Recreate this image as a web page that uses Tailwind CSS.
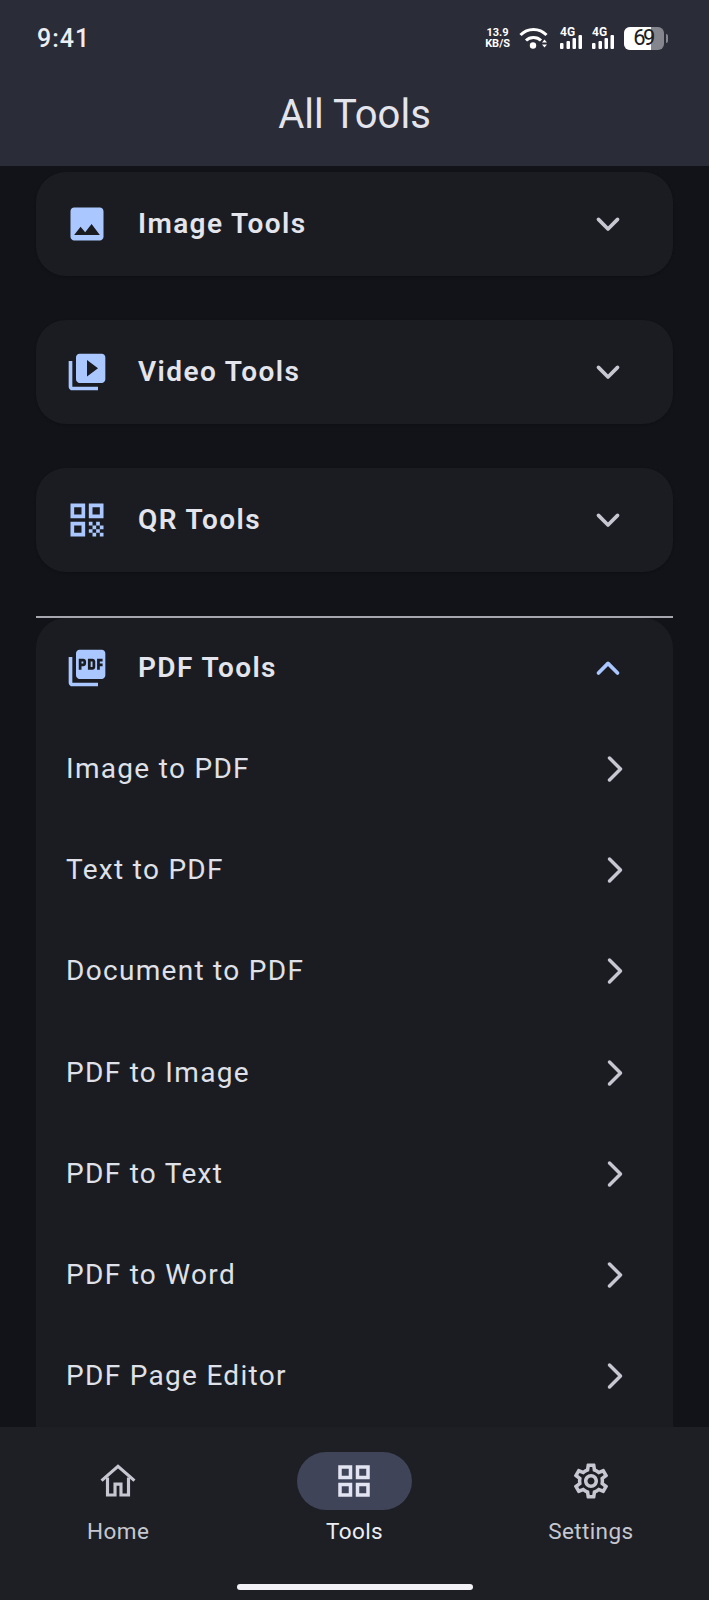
<!DOCTYPE html>
<html lang="en">
<head>
    <meta charset="UTF-8">
    <meta name="viewport" content="width=device-width, initial-scale=1.0">
    <title>All Tools</title>
    <script src="https://cdn.jsdelivr.net/npm/@tailwindcss/browser@4"></script>
</head>
<body class="bg-[#111318] font-['Roboto',sans-serif]">
    <div class="w-[709px] h-[1600px] flex flex-col overflow-hidden">
        <!-- Header -->
        <header class="h-[166px] shrink-0 bg-[#2a2c38] flex flex-col">
            <div class="h-[76px] flex items-center justify-between pl-[37px] pr-[41px]">
                <span class="text-[25px] leading-none font-medium tracking-[1px] text-[#eceef4]">9:41</span>
                <div class="flex items-center text-white">
                    <div class="flex flex-col items-center font-bold text-[11px] leading-[11px] mr-[9px]">
                        <span>13.9</span>
                        <span>KB/S</span>
                    </div>
                    <svg class="w-[29px] h-[22px] mr-[11px]" viewBox="0 0 29 22" fill="none" stroke="currentColor" stroke-width="3">
                        <path d="M1.500 8C8.500 .5 20.500 .5 27.500 8"/>
                        <path d="M7 13.500C11 9.500 18 9.500 22 13.500"/>
                        <circle cx="14" cy="18.500" r="3.200" fill="currentColor" stroke="none"/>
                        <path d="M23 15.500l2.500-3 2.500 3zM23 17.500l2.500 3 2.500-3z" fill="currentColor" stroke="none"/>
                    </svg>
                    <div class="flex flex-col items-start w-[23px] mr-[9px]">
                        <span class="font-bold text-[12px] leading-[10px] ml-[1px]">4G</span>
                        <svg class="w-[23px] h-[14px] -mt-[2px]" viewBox="0 0 23 14" fill="currentColor">
                            <rect x="1" y="8" width="3.500" height="6" rx="1"/><rect x="7.500" y="6" width="3.500" height="8" rx="1"/><rect x="13.500" y="3" width="3.500" height="11" rx="1"/><rect x="19.500" y="0" width="3.500" height="14" rx="1"/>
                        </svg>
                    </div>
                    <div class="flex flex-col items-start w-[23px] mr-[10px]">
                        <span class="font-bold text-[12px] leading-[10px] ml-[1px]">4G</span>
                        <svg class="w-[23px] h-[14px] -mt-[2px]" viewBox="0 0 23 14" fill="currentColor">
                            <rect x="1" y="8" width="3.500" height="6" rx="1"/><rect x="7.500" y="6" width="3.500" height="8" rx="1"/><rect x="13.500" y="3" width="3.500" height="11" rx="1"/><rect x="19.500" y="0" width="3.500" height="14" rx="1"/>
                        </svg>
                    </div>
                    <div class="relative w-[40px] h-[23px] rounded-[6px] overflow-hidden flex bg-[#85868d]">
                        <div class="w-[27px] bg-white"></div>
                        <span class="absolute inset-0 flex items-center justify-center text-[22px] leading-none tracking-[-2.5px] pr-[2px] text-[#1c1d22]">69</span>
                    </div>
                    <div class="w-[2px] h-[9px] ml-[2px] rounded-r bg-[#85868d]"></div>
                </div>
            </div>
            <h1 class="text-center text-[40px] leading-[44px] mt-[17px] text-[#e3e4ec]">All Tools</h1>
        </header>

        <!-- Tool groups -->
        <main class="flex-1 min-h-0 overflow-hidden px-[36px] pt-[6px]">
            <section class="h-[104px] mb-[44px] bg-[#1a1c22] rounded-[30px] flex items-center pl-[29px] pr-[43px] shadow-sm">
                <svg class="w-[44px] h-[44px] text-[#aac7ff]" viewBox="0 0 24 24" fill="currentColor"><path d="M21 19V5c0-1.100-.9-2-2-2H5c-1.100 0-2 .9-2 2v14c0 1.100.9 2 2 2h14c1.100 0 2-.9 2-2zM8.500 13.500l2.500 3.010L14.500 12l4.500 6H5l3.500-4.500z"/></svg>
                <span class="ml-[29px] flex-1 text-[28px] font-semibold tracking-[1.4px] text-[#e3e4ec]">Image Tools</span>
                <svg class="w-[44px] h-[44px] text-[#c6c7d0]" viewBox="0 0 24 24" fill="none" stroke="currentColor" stroke-width="2" stroke-linecap="round" stroke-linejoin="round"><path d="M6.800 9.500 12 14.700l5.200-5.200"/></svg>
            </section>

            <section class="h-[104px] mb-[44px] bg-[#1a1c22] rounded-[30px] flex items-center pl-[29px] pr-[43px] shadow-sm">
                <svg class="w-[44px] h-[44px] text-[#aac7ff]" viewBox="0 0 24 24" fill="currentColor"><path d="M4 6H2v14c0 1.100.9 2 2 2h14v-2H4V6zm16-4H8c-1.100 0-2 .9-2 2v12c0 1.100.9 2 2 2h12c1.100 0 2-.9 2-2V4c0-1.100-.9-2-2-2zm-8 12.500v-9l6 4.500-6 4.500z"/></svg>
                <span class="ml-[29px] flex-1 text-[28px] font-semibold tracking-[1.4px] text-[#e3e4ec]">Video Tools</span>
                <svg class="w-[44px] h-[44px] text-[#c6c7d0]" viewBox="0 0 24 24" fill="none" stroke="currentColor" stroke-width="2" stroke-linecap="round" stroke-linejoin="round"><path d="M6.800 9.500 12 14.700l5.200-5.200"/></svg>
            </section>

            <section class="h-[104px] mb-[44px] bg-[#1a1c22] rounded-[30px] flex items-center pl-[29px] pr-[43px] shadow-sm">
                <svg class="w-[44px] h-[44px] text-[#aac7ff]" viewBox="0 0 24 24" fill="currentColor"><path d="M3 11h8V3H3v8zm2-6h4v4H5V5zM3 21h8v-8H3v8zm2-6h4v4H5v-4zm8-12v8h8V3h-8zm6 6h-4V5h4v4zm0 10h2v2h-2zm-6-6h2v2h-2zm2 2h2v2h-2zm-2 2h2v2h-2zm2 2h2v2h-2zm2-2h2v2h-2zm0-4h2v2h-2zm2 2h2v2h-2z"/></svg>
                <span class="ml-[29px] flex-1 text-[28px] font-semibold tracking-[1.4px] text-[#e3e4ec]">QR Tools</span>
                <svg class="w-[44px] h-[44px] text-[#c6c7d0]" viewBox="0 0 24 24" fill="none" stroke="currentColor" stroke-width="2" stroke-linecap="round" stroke-linejoin="round"><path d="M6.800 9.500 12 14.700l5.200-5.200"/></svg>
            </section>

            <!-- Expanded group -->
            <section class="border-t-2 border-[#a5a6ae]">
                <div class="bg-[#1a1c22] rounded-t-[30px] pb-[40px]">
                    <div class="h-[100px] flex items-center pl-[29px] pr-[43px]">
                        <svg class="w-[44px] h-[44px] text-[#aac7ff]" viewBox="0 0 24 24" fill="currentColor"><path d="M20 2H8c-1.100 0-2 .9-2 2v12c0 1.100.9 2 2 2h12c1.100 0 2-.9 2-2V4c0-1.100-.9-2-2-2zm-8.500 7.500c0 .83-.67 1.500-1.500 1.500H9v2H7.500V7H10c.83 0 1.500.67 1.500 1.500v1zm5 2c0 .83-.67 1.500-1.500 1.500h-2.500V7H15c.83 0 1.500.67 1.500 1.500v3zm4-3H19v1h1.500V11H19v2h-1.500V7h3v1.500zM9 9.500h1v-1H9v1zM4 6H2v14c0 1.100.9 2 2 2h14v-2H4V6zm10 5.500h1v-3h-1v3z"/></svg>
                        <span class="ml-[29px] flex-1 text-[28px] font-semibold tracking-[1.4px] text-[#e3e4ec]">PDF Tools</span>
                        <svg class="w-[44px] h-[44px] text-[#aac7ff]" viewBox="0 0 24 24" fill="none" stroke="currentColor" stroke-width="2" stroke-linecap="round" stroke-linejoin="round"><path d="M6.800 14.700 12 9.500l5.200 5.200"/></svg>
                    </div>
                    <div class="h-[101.300px] flex items-center justify-between pl-[30px] pr-[36px]">
                        <span class="text-[28px] tracking-[1.3px] text-[#dfe0e8]">Image to PDF</span>
                        <svg class="w-[44px] h-[44px] text-[#c6c7d0]" viewBox="0 0 24 24" fill="none" stroke="currentColor" stroke-width="1.900" stroke-linecap="round" stroke-linejoin="round"><path d="M9 6l6 6-6 6"/></svg>
                    </div>
                    <div class="h-[101.300px] flex items-center justify-between pl-[30px] pr-[36px]">
                        <span class="text-[28px] tracking-[1.3px] text-[#dfe0e8]">Text to PDF</span>
                        <svg class="w-[44px] h-[44px] text-[#c6c7d0]" viewBox="0 0 24 24" fill="none" stroke="currentColor" stroke-width="1.900" stroke-linecap="round" stroke-linejoin="round"><path d="M9 6l6 6-6 6"/></svg>
                    </div>
                    <div class="h-[101.300px] flex items-center justify-between pl-[30px] pr-[36px]">
                        <span class="text-[28px] tracking-[1.3px] text-[#dfe0e8]">Document to PDF</span>
                        <svg class="w-[44px] h-[44px] text-[#c6c7d0]" viewBox="0 0 24 24" fill="none" stroke="currentColor" stroke-width="1.900" stroke-linecap="round" stroke-linejoin="round"><path d="M9 6l6 6-6 6"/></svg>
                    </div>
                    <div class="h-[101.300px] flex items-center justify-between pl-[30px] pr-[36px]">
                        <span class="text-[28px] tracking-[1.3px] text-[#dfe0e8]">PDF to Image</span>
                        <svg class="w-[44px] h-[44px] text-[#c6c7d0]" viewBox="0 0 24 24" fill="none" stroke="currentColor" stroke-width="1.900" stroke-linecap="round" stroke-linejoin="round"><path d="M9 6l6 6-6 6"/></svg>
                    </div>
                    <div class="h-[101.300px] flex items-center justify-between pl-[30px] pr-[36px]">
                        <span class="text-[28px] tracking-[1.3px] text-[#dfe0e8]">PDF to Text</span>
                        <svg class="w-[44px] h-[44px] text-[#c6c7d0]" viewBox="0 0 24 24" fill="none" stroke="currentColor" stroke-width="1.900" stroke-linecap="round" stroke-linejoin="round"><path d="M9 6l6 6-6 6"/></svg>
                    </div>
                    <div class="h-[101.300px] flex items-center justify-between pl-[30px] pr-[36px]">
                        <span class="text-[28px] tracking-[1.3px] text-[#dfe0e8]">PDF to Word</span>
                        <svg class="w-[44px] h-[44px] text-[#c6c7d0]" viewBox="0 0 24 24" fill="none" stroke="currentColor" stroke-width="1.900" stroke-linecap="round" stroke-linejoin="round"><path d="M9 6l6 6-6 6"/></svg>
                    </div>
                    <div class="h-[101.300px] flex items-center justify-between pl-[30px] pr-[36px]">
                        <span class="text-[28px] tracking-[1.3px] text-[#dfe0e8]">PDF Page Editor</span>
                        <svg class="w-[44px] h-[44px] text-[#c6c7d0]" viewBox="0 0 24 24" fill="none" stroke="currentColor" stroke-width="1.900" stroke-linecap="round" stroke-linejoin="round"><path d="M9 6l6 6-6 6"/></svg>
                    </div>
                </div>
            </section>
        </main>

        <!-- Bottom nav -->
        <nav class="h-[173px] shrink-0 bg-[#1e1f25] flex flex-col">
            <div class="grid grid-cols-3 pt-[25px]">
                <div class="flex flex-col items-center">
                    <div class="h-[58px] flex items-center justify-center">
                        <svg class="w-[42px] h-[42px] text-[#c6c7d0]" viewBox="0 0 24 24" fill="none" stroke="currentColor" stroke-width="1.800"><path d="M2.600 11.800 12 3.600l9.400 8.200"/><path d="M6 10v10h4.300v-6.200h3.400V20H18V10"/></svg>
                    </div>
                    <span class="mt-[6px] text-[22.500px] leading-[30px] tracking-[0.4px] text-[#c6c7d0]">Home</span>
                </div>
                <div class="flex flex-col items-center">
                    <div class="w-[115px] h-[58px] rounded-[29px] bg-[#3f4458] flex items-center justify-center">
                        <svg class="w-[42px] h-[42px] text-[#e3e4f2]" viewBox="0 0 24 24" fill="currentColor"><path d="M3 3v8h8V3H3zm6 6H5V5h4v4zm-6 4v8h8v-8H3zm6 6H5v-4h4v4zm4-16v8h8V3h-8zm6 6h-4V5h4v4zm-6 4v8h8v-8h-8zm6 6h-4v-4h4v4z"/></svg>
                    </div>
                    <span class="mt-[6px] text-[22.500px] leading-[30px] tracking-[0.4px] text-[#eceef4]">Tools</span>
                </div>
                <div class="flex flex-col items-center">
                    <div class="h-[58px] flex items-center justify-center">
                        <svg class="w-[42px] h-[42px] text-[#c6c7d0]" viewBox="0 0 24 24" fill="currentColor"><path d="M19.430 12.980c.04-.32.07-.64.07-.98s-.03-.66-.07-.98l2.110-1.650c.19-.15.24-.42.12-.64l-2-3.460c-.12-.22-.39-.3-.61-.22l-2.490 1c-.52-.4-1.080-.73-1.690-.98l-.38-2.650C14.460 2.180 14.250 2 14 2h-4c-.25 0-.46.18-.49.42l-.38 2.650c-.61.25-1.170.59-1.690.98l-2.490-1c-.23-.09-.49 0-.61.22l-2 3.460c-.13.22-.07.49.12.64l2.110 1.650c-.04.32-.07.65-.07.98s.03.66.07.98l-2.110 1.650c-.19.15-.24.42-.12.64l2 3.460c.12.22.39.3.61.22l2.490-1c.52.4 1.080.73 1.690.98l.38 2.650c.03.24.24.42.49.42h4c.25 0 .46-.18.49-.42l.38-2.650c.61-.25 1.170-.59 1.690-.98l2.490 1c.23.09.49 0 .61-.22l2-3.460c.12-.22.07-.49-.12-.64l-2.110-1.650zM17.450 11.270c.04.31.05.52.05.73 0 .21-.02.43-.05.73l-.14 1.130.89.7 1.080.84-.7 1.210-1.270-.51-1.040-.42-.9.68c-.43.32-.84.56-1.250.73l-1.060.43-.16 1.130-.2 1.350h-1.400l-.19-1.350-.16-1.130-1.060-.43c-.43-.18-.83-.41-1.230-.71l-.91-.7-1.060.43-1.270.51-.7-1.210 1.080-.84.89-.7-.14-1.130c-.03-.31-.05-.54-.05-.74s.02-.43.05-.73l.14-1.130-.89-.7-1.080-.84.7-1.210 1.270.51 1.040.42.9-.68c.43-.32.84-.56 1.250-.73l1.060-.43.16-1.130.2-1.350h1.390l.19 1.350.16 1.130 1.060.43c.43.18.83.41 1.230.71l.91.7 1.060-.43 1.270-.51.7 1.210-1.070.85-.89.7.14 1.130zM12 8c-2.210 0-4 1.790-4 4s1.790 4 4 4 4-1.790 4-4-1.790-4-4-4zm0 6c-1.100 0-2-.9-2-2s.9-2 2-2 2 .9 2 2-.9 2-2 2z"/></svg>
                    </div>
                    <span class="mt-[6px] text-[22.500px] leading-[30px] tracking-[0.4px] text-[#c6c7d0]">Settings</span>
                </div>
            </div>
            <div class="mt-auto mb-[10px] mx-auto w-[236px] h-[6px] rounded-full bg-[#f2f2f6]"></div>
        </nav>
    </div>
</body>
</html>
